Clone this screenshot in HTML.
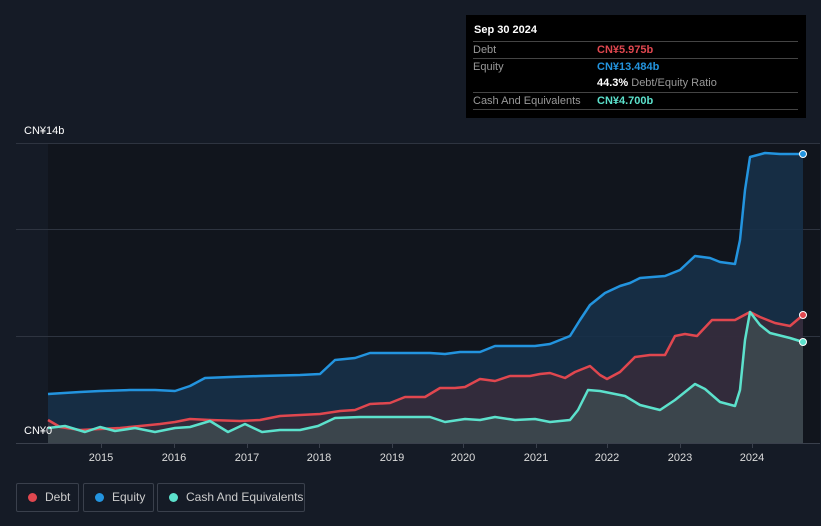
<!DOCTYPE html><html><head><style>
body{margin:0;width:821px;height:526px;background:#151b26;font-family:"Liberation Sans",sans-serif;position:relative;overflow:hidden}
.t{position:absolute;font-size:11px;color:#fff}
.tip{position:absolute;left:466px;top:15px;width:340px;height:103px;background:#000}
.row{position:absolute;left:7px;width:325px;border-top:1px solid #444;height:17px;font-size:11px;line-height:17px;color:#999}
.row span{position:absolute;left:124px;font-weight:bold}
.leg{position:absolute;top:483px;height:27px;border:1px solid #3a404c;border-radius:2px;color:#ccc;font-size:12px;line-height:27px}
.dot{display:inline-block;width:9px;height:9px;border-radius:50%;margin:0 8px 0 11px;vertical-align:-1px}
</style></head><body>
<svg width="821" height="526" style="position:absolute;left:0;top:0">
<rect x="48" y="143" width="772" height="300" fill="#11151d"/>
<g stroke="#2e3440" stroke-width="1"><line x1="16" y1="143.5" x2="820" y2="143.5"/><line x1="16" y1="229.5" x2="820" y2="229.5"/><line x1="16" y1="336.5" x2="820" y2="336.5"/></g>
<polygon fill="#173049" opacity="0.9" points="48,443 48,394 80,392 100,391 130,390 155,390 175,391 190,386 205,378 230,377 260,376 300,375 320,374 335,360 355,358 370,353 400,353 430,353 445,354 460,352 480,352 495,346 535,346 550,344 570,336 580,320 590,305 605,293 620,286 630,283 640,278 665,276 680,270 695,256 710,258 720,262 735,264 740,240 745,190 750,157 765,153 780,154 803,154 803,443"/>
<polygon fill="#3a2a3a" opacity="0.8" points="48,443 48,420 60,427 80,430 100,429 120,428 140,426 160,424 175,422 190,419 210,420 240,421 260,420 280,416 300,415 320,414 340,411 355,410 370,404 390,403 405,397 425,397 440,388 455,388 465,387 480,379 495,381 510,376 530,376 540,374 550,373 565,378 575,372 590,366 600,375 607,379 620,372 635,357 650,355 665,355 675,336 685,334 697,336 712,320 735,320 750,312 760,317 775,323 790,326 803,315 803,443"/>
<polygon fill="#3d4a50" opacity="0.85" points="48,443 48,428 65,426 85,432 100,427 115,431 135,428 155,432 175,428 190,427 210,421 228,432 245,424 262,432 280,430 300,430 318,426 335,418 360,417 400,417 430,417 445,422 465,419 480,420 495,417 515,420 535,419 550,422 570,420 578,410 588,390 600,391 625,396 640,405 660,410 675,400 695,384 705,389 720,402 735,406 740,390 745,340 750,312 760,325 770,333 790,338 803,342 803,443"/>
<g fill="none" stroke-width="2.5" stroke-linejoin="round">
<polyline stroke="#2394df" points="48,394 80,392 100,391 130,390 155,390 175,391 190,386 205,378 230,377 260,376 300,375 320,374 335,360 355,358 370,353 400,353 430,353 445,354 460,352 480,352 495,346 535,346 550,344 570,336 580,320 590,305 605,293 620,286 630,283 640,278 665,276 680,270 695,256 710,258 720,262 735,264 740,240 745,190 750,157 765,153 780,154 803,154"/>
<polyline stroke="#e0474f" points="48,420 60,427 80,430 100,429 120,428 140,426 160,424 175,422 190,419 210,420 240,421 260,420 280,416 300,415 320,414 340,411 355,410 370,404 390,403 405,397 425,397 440,388 455,388 465,387 480,379 495,381 510,376 530,376 540,374 550,373 565,378 575,372 590,366 600,375 607,379 620,372 635,357 650,355 665,355 675,336 685,334 697,336 712,320 735,320 750,312 760,317 775,323 790,326 803,315"/>
<polyline stroke="#5ce1cc" points="48,428 65,426 85,432 100,427 115,431 135,428 155,432 175,428 190,427 210,421 228,432 245,424 262,432 280,430 300,430 318,426 335,418 360,417 400,417 430,417 445,422 465,419 480,420 495,417 515,420 535,419 550,422 570,420 578,410 588,390 600,391 625,396 640,405 660,410 675,400 695,384 705,389 720,402 735,406 740,390 745,340 750,312 760,325 770,333 790,338 803,342"/>
</g>
<circle cx="803" cy="154" r="3.5" fill="#2394df" stroke="#fff" stroke-width="1"/>
<circle cx="803" cy="315" r="3.5" fill="#e0474f" stroke="#fff" stroke-width="1"/>
<circle cx="803" cy="342" r="3.5" fill="#5ce1cc" stroke="#fff" stroke-width="1"/>
<line x1="16" y1="443.5" x2="820" y2="443.5" stroke="#3a404c"/>
<g stroke="#3a404c"><line x1="101.5" y1="443" x2="101.5" y2="448"/><line x1="174.5" y1="443" x2="174.5" y2="448"/><line x1="247.5" y1="443" x2="247.5" y2="448"/><line x1="319.5" y1="443" x2="319.5" y2="448"/><line x1="392.5" y1="443" x2="392.5" y2="448"/><line x1="463.5" y1="443" x2="463.5" y2="448"/><line x1="536.5" y1="443" x2="536.5" y2="448"/><line x1="607.5" y1="443" x2="607.5" y2="448"/><line x1="680.5" y1="443" x2="680.5" y2="448"/><line x1="752.5" y1="443" x2="752.5" y2="448"/></g>
<g fill="#ddd" font-size="11" font-family="Liberation Sans" text-anchor="middle">
<text x="101" y="461">2015</text><text x="174" y="461">2016</text><text x="247" y="461">2017</text><text x="319" y="461">2018</text><text x="392" y="461">2019</text><text x="463" y="461">2020</text><text x="536" y="461">2021</text><text x="607" y="461">2022</text><text x="680" y="461">2023</text><text x="752" y="461">2024</text></g>
</svg>
<div class="t" style="left:24px;top:125px">CN¥14b</div>
<div class="t" style="left:24px;top:425px">CN¥0</div>
<div class="tip">
<div style="position:absolute;left:8px;top:9px;color:#fff;font-size:11px;font-weight:bold">Sep 30 2024</div>
<div class="row" style="top:26px">Debt<span style="color:#e0474f">CN¥5.975b</span></div>
<div class="row" style="top:43px">Equity<span style="color:#2394df">CN¥13.484b</span></div>
<div class="row" style="top:60px;border-top:none"><span style="color:#fff">44.3% <b style="font-weight:normal;color:#999">Debt/Equity Ratio</b></span></div>
<div class="row" style="top:77px">Cash And Equivalents<span style="color:#5ce1cc">CN¥4.700b</span></div>
<div class="row" style="top:94px;height:0"></div>
</div>
<div class="leg" style="left:16px;width:61px"><span class="dot" style="background:#e0474f"></span>Debt</div>
<div class="leg" style="left:83px;width:69px"><span class="dot" style="background:#2394df"></span>Equity</div>
<div class="leg" style="left:157px;width:146px"><span class="dot" style="background:#5ce1cc"></span>Cash And Equivalents</div>
</body></html>
